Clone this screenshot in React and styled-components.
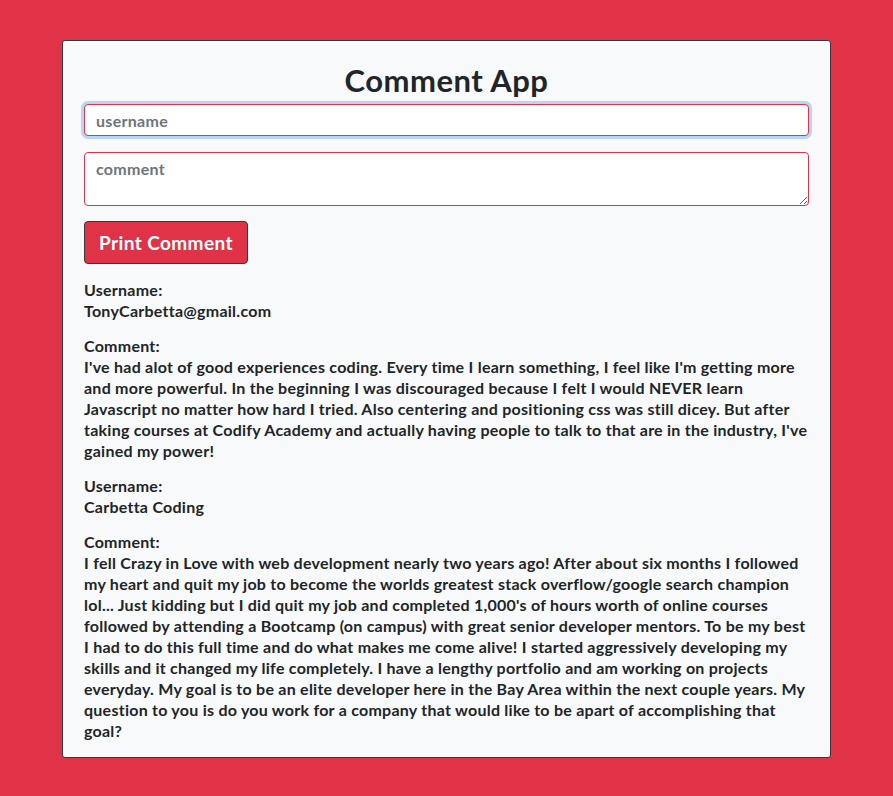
import React, { useState } from "react";
import styled, { createGlobalStyle } from "styled-components";

const GlobalStyle = createGlobalStyle`
  html, body {
    margin: 0;
    padding: 0;
    background: #e03347;
  }
  body {
    font-family: Lato, "Noto Sans", sans-serif;
    color: #212529;
  }
`;

const Page = styled.div`
  padding: 40px 62px 39px 62px;
  min-height: 796px;
  box-sizing: border-box;
`;

const Card = styled.div`
  background: #f8f9fa;
  border: 1px solid #343a40;
  border-radius: 3px;
  padding: 18px 21px 16px 21px;
`;

const Title = styled.h1`
  margin: 0 0 3px 0;
  text-align: center;
  font-size: 31px;
  font-weight: 700;
  letter-spacing: 0.5px;
  line-height: 42px;
  color: #212529;
`;

const Field = styled.input`
  display: block;
  width: 100%;
  box-sizing: border-box;
  height: 32px;
  border: 1px solid #e03347;
  border-radius: 4px;
  padding: 0 11px;
  font-family: inherit;
  font-size: 16px;
  font-weight: 700;
  letter-spacing: 0.3px;
  background: #fff;
  box-shadow: ${(p) => (p.$focused ? "0 0 0 3px #b8d7f6" : "none")};
  outline: none;
  &::placeholder {
    color: #6c757d;
  }
`;

const Area = styled.textarea`
  display: block;
  width: 100%;
  box-sizing: border-box;
  height: 54px;
  margin-top: 16px;
  border: 1px solid #e03347;
  border-radius: 4px;
  padding: 6px 11px;
  font-family: inherit;
  font-size: 16px;
  font-weight: 700;
  letter-spacing: 0.3px;
  background: #fff;
  outline: none;
  &::placeholder {
    color: #6c757d;
  }
`;

const Button = styled.button`
  display: block;
  margin-top: 15px;
  height: 43px;
  padding: 0 14px;
  background: #e03347;
  color: #fff;
  border: 1px solid #343a40;
  border-radius: 4px;
  font-family: inherit;
  font-size: 19px;
  font-weight: 700;
  letter-spacing: 0.4px;
`;

const List = styled.div`
  margin-top: 15px;
`;

const Block = styled.div`
  font-size: 16px;
  font-weight: 700;
  letter-spacing: 0.25px;
  line-height: 21px;
  margin-bottom: 14px;
  &:last-child {
    margin-bottom: 0;
  }
`;

const comments = [
  {
    username: "TonyCarbetta@gmail.com",
    comment:
      "I've had alot of good experiences coding. Every time I learn something, I feel like I'm getting more and more powerful. In the beginning I was discouraged because I felt I would NEVER learn Javascript no matter how hard I tried. Also centering and positioning css was still dicey. But after taking courses at Codify Academy and actually having people to talk to that are in the industry, I've gained my power!",
  },
  {
    username: "Carbetta Coding",
    comment:
      "I fell Crazy in Love with web development nearly two years ago! After about six months I followed my heart and quit my job to become the worlds greatest stack overflow/google search champion lol... Just kidding but I did quit my job and completed 1,000's of hours worth of online courses followed by attending a Bootcamp (on campus) with great senior developer mentors. To be my best I had to do this full time and do what makes me come alive! I started aggressively developing my skills and it changed my life completely. I have a lengthy portfolio and am working on projects everyday. My goal is to be an elite developer here in the Bay Area within the next couple years. My question to you is do you work for a company that would like to be apart of accomplishing that goal?",
  },
];

export default function App() {
  const [name, setName] = useState("");
  const [text, setText] = useState("");

  return (
    <>
      <GlobalStyle />
      <Page>
        <Card>
          <Title>Comment App</Title>
          <Field
            $focused
            placeholder="username"
            value={name}
            onChange={(e) => setName(e.target.value)}
          />
          <Area
            placeholder="comment"
            value={text}
            onChange={(e) => setText(e.target.value)}
          />
          <Button>Print Comment</Button>
          <List>
            {comments.map((c, i) => (
              <React.Fragment key={i}>
                <Block>
                  Username:
                  <br />
                  {c.username}
                </Block>
                <Block>
                  Comment:
                  <br />
                  {c.comment}
                </Block>
              </React.Fragment>
            ))}
          </List>
        </Card>
      </Page>
    </>
  );
}
